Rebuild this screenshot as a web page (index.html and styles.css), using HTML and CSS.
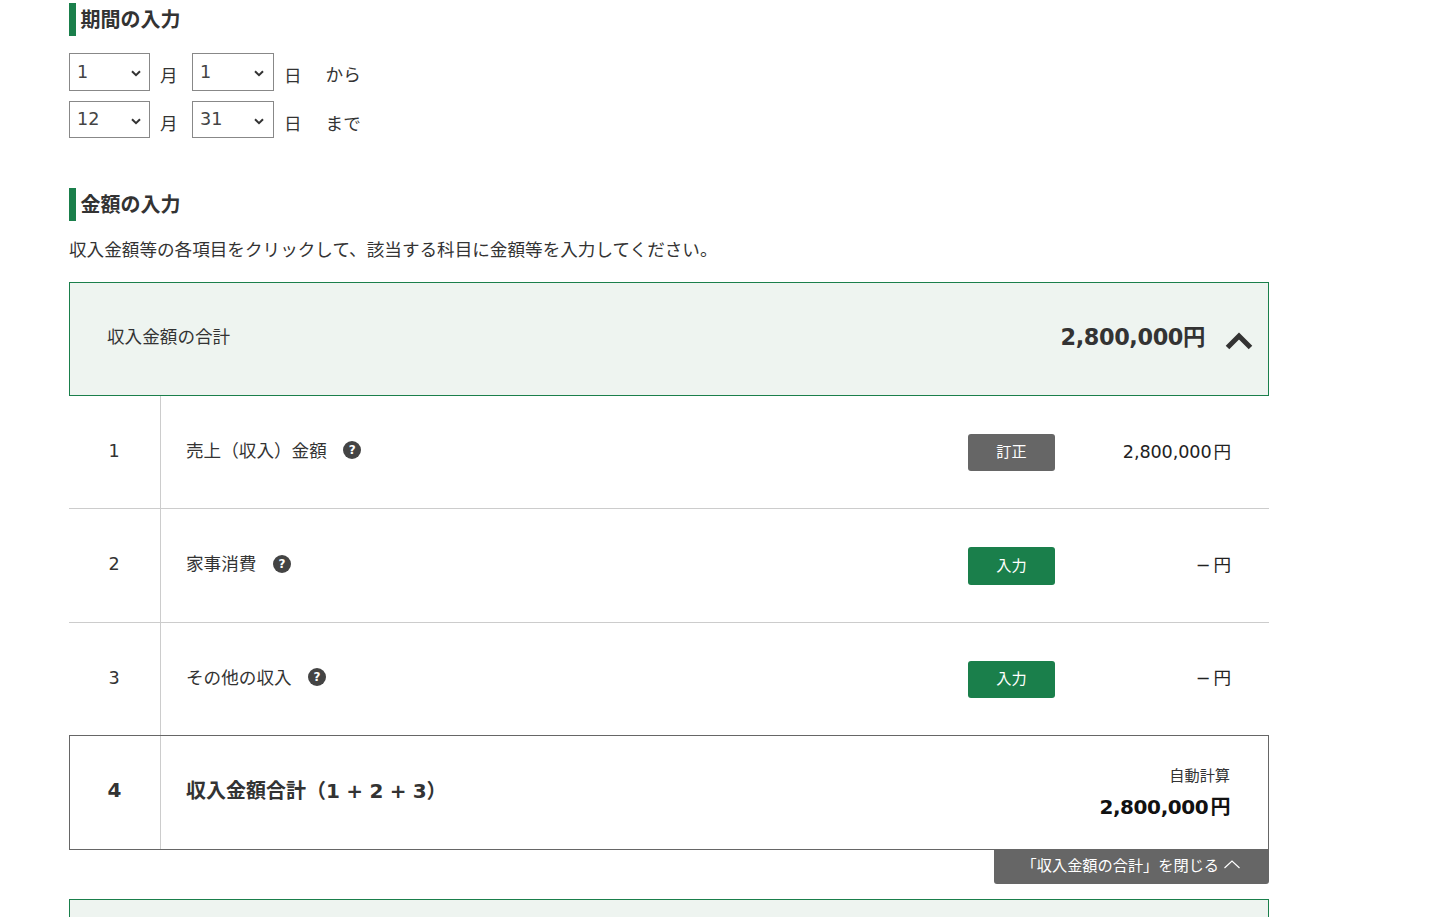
FILE: index.html
```html
<!DOCTYPE html>
<html lang="ja">
<head>
<meta charset="utf-8">
<title>期間と金額の入力</title>
<link rel="stylesheet" href="styles.css">
</head>
<body>
<main class="page">
  <h2 class="heading">期間の入力</h2>
  <div class="date-rows">
    <div class="date-row">
      <div class="sel-wrap"><select class="sel" aria-label="開始月"><option>1</option></select><svg class="sel-arrow" width="10" height="7" viewBox="0 0 10 7" aria-hidden="true"><polyline points="1,1.2 5,5.2 9,1.2" fill="none" stroke="#333" stroke-width="2"/></svg></div><span class="unit">月</span>
      <div class="sel-wrap sel-day"><select class="sel" aria-label="開始日"><option>1</option></select><svg class="sel-arrow" width="10" height="7" viewBox="0 0 10 7" aria-hidden="true"><polyline points="1,1.2 5,5.2 9,1.2" fill="none" stroke="#333" stroke-width="2"/></svg></div><span class="unit">日</span>
      <span class="range">から</span>
    </div>
    <div class="date-row">
      <div class="sel-wrap"><select class="sel" aria-label="終了月"><option>12</option></select><svg class="sel-arrow" width="10" height="7" viewBox="0 0 10 7" aria-hidden="true"><polyline points="1,1.2 5,5.2 9,1.2" fill="none" stroke="#333" stroke-width="2"/></svg></div><span class="unit">月</span>
      <div class="sel-wrap sel-day"><select class="sel" aria-label="終了日"><option>31</option></select><svg class="sel-arrow" width="10" height="7" viewBox="0 0 10 7" aria-hidden="true"><polyline points="1,1.2 5,5.2 9,1.2" fill="none" stroke="#333" stroke-width="2"/></svg></div><span class="unit">日</span>
      <span class="range">まで</span>
    </div>
  </div>

  <h2 class="heading heading-amount">金額の入力</h2>
  <p class="lead">収入金額等の各項目をクリックして、該当する科目に金額等を入力してください。</p>

  <section class="panel">
    <span class="panel-label">収入金額の合計</span>
    <span class="panel-value">2,800,000円</span>
    <svg class="panel-chevron" width="28" height="18" viewBox="0 0 28 18" aria-hidden="true"><polyline points="2.5,15.5 14,4 25.5,15.5" fill="none" stroke="#333" stroke-width="5"/></svg>
  </section>

  <div class="row row-1">
    <div class="num">1</div>
    <div class="body">
      <span class="label">売上（収入）金額</span><span class="help">?</span>
      <button class="btn btn-edit" type="button">訂正</button>
      <div class="amount"><span class="digits">2,800,000</span><span class="yen">円</span></div>
    </div>
  </div>
  <div class="row row-2">
    <div class="num">2</div>
    <div class="body">
      <span class="label">家事消費</span><span class="help">?</span>
      <button class="btn btn-input" type="button">入力</button>
      <div class="amount amount-empty"><span class="digits">−</span><span class="yen">円</span></div>
    </div>
  </div>
  <div class="row row-3">
    <div class="num">3</div>
    <div class="body">
      <span class="label">その他の収入</span><span class="help">?</span>
      <button class="btn btn-input" type="button">入力</button>
      <div class="amount amount-empty"><span class="digits">−</span><span class="yen">円</span></div>
    </div>
  </div>
  <div class="row row-total">
    <div class="num">4</div>
    <div class="body">
      <span class="label">収入金額合計（<span class="sum">1 + 2 + 3</span>）</span>
      <div class="auto">
        <div class="auto-label">自動計算</div>
        <div class="auto-value"><span class="digits">2,800,000</span><span class="yen">円</span></div>
      </div>
    </div>
  </div>
  <div class="close-wrap">
    <button class="close" type="button">「収入金額の合計」を閉じる
      <svg width="18" height="10" viewBox="0 0 18 10" aria-hidden="true"><polyline points="1.5,9 9,2 16.5,9" fill="none" stroke="#fff" stroke-width="1.2"/></svg>
    </button>
  </div>

  <section class="panel panel-next"></section>
</main>
</body>
</html>
```
FILE: styles.css
```css
* { box-sizing: border-box; }
html, body { margin: 0; padding: 0; background: #fff; }
body {
  font-family: "DejaVu Sans", "Noto Sans CJK JP", sans-serif;
  font-size: 17.6px;
  color: #333;
}
.page { width: 1200px; margin-left: 69px; padding-top: 3px; }
.heading {
  margin: 0;
  height: 33px;
  border-left: 7px solid #1a7f4b;
  padding-left: 4.5px;
  font-size: 20px;
  font-weight: 700;
  line-height: 33px;
  padding-top: 1px;
}
.date-rows { margin-top: 17px; }
.date-row { display: flex; align-items: center; height: 38px; margin-bottom: 10px; }
.date-row + .date-row { height: 37px; margin-bottom: 0; }
.sel-wrap { position: relative; width: 81px; height: 100%; }
.sel-wrap.sel-day { width: 82px; }
.sel {
  display: block;
  width: 100%;
  height: 100%;
  appearance: none;
  border: 1px solid #888;
  border-radius: 0;
  background: #fff;
  padding: 0 7px 0;
  color: #444;
  font: inherit;
}
.date-row + .date-row .sel { padding-bottom: 2px; }
.sel-arrow { position: absolute; left: 62px; top: 17px; pointer-events: none; }
.unit { margin: 4px 14.4px 0 10px; width: 17.6px; }
.sel-day + .unit { margin-right: 24px; }
.range { margin-top: 2px; }
.date-row + .date-row .unit, .date-row + .date-row .range { margin-top: 6px; }
.heading-amount { margin-top: 50px; }
.lead { margin: 16px 0 0; line-height: 26px; }
.panel {
  display: flex;
  align-items: center;
  height: 114px;
  margin-top: 19px;
  padding: 0 15px 6px 37px;
  border: 1px solid #1a7f4b;
  background: #eef4f0;
}
.panel-label { flex: 1; margin-bottom: 2px; }
.panel-value { font-size: 22.4px; font-weight: 700; letter-spacing: -0.4px; margin-bottom: 2px; }
.panel-chevron { margin-left: 20px; margin-top: 10px; }
.panel-next { margin-top: 15px; }
.row { display: flex; height: 113px; border-bottom: 1px solid #ccc; }
.row-2 { height: 114px; }
.row-3 { height: 112px; border-bottom: 0; }
.num { width: 92px; padding-right: 1px; border-right: 1px solid #ccc; display: flex; align-items: center; justify-content: center; padding-bottom: 3px; }
.body { flex: 1; display: flex; align-items: center; padding: 0 38px 0 25px; }
.label { padding-bottom: 6px; }
.help {
  display: flex;
  align-items: center;
  justify-content: center;
  width: 18px;
  height: 18px;
  margin: 0 0 4px 16.5px;
  border-radius: 50%;
  background: #444;
  color: #fff;
  font-size: 12px;
  font-weight: 700;
}
.btn {
  width: 87px;
  height: 37px;
  margin-left: auto;
  border: 0;
  border-radius: 3px;
  color: #fff;
  font: inherit;
  font-size: 15.2px;
  padding: 0 0 4px;
}
.btn-edit { background: #666; }
.btn-input { background: #1a7f4b; }
.row-2 .btn { height: 38px; }
.amount { width: 176px; text-align: right; color: #222; padding-bottom: 3px; letter-spacing: -0.1px; }
.amount .yen { margin-left: 2px; }
.amount-empty { padding-bottom: 5px; }
.amount-empty .digits { margin-right: 1px; }
.row-total {
  height: 115px;
  border: 1px solid #666;
}
.row-total .num { width: 91px; font-size: 20px; font-weight: 700; padding-bottom: 6px; }
.row-total .label { font-size: 20px; font-weight: 700; padding-bottom: 6px; }
.sum { letter-spacing: -0.3px; }
.auto { margin-left: auto; text-align: right; padding-bottom: 3px; }
.auto-label { font-size: 15.2px; line-height: 22px; margin-top: 4px; }
.auto-value { margin-top: 5px; font-size: 20px; font-weight: 700; line-height: 30px; color: #111; letter-spacing: -0.4px; }
.auto-value .yen { margin-left: 2px; }
.close-wrap { display: flex; justify-content: flex-end; }
.close {
  display: flex;
  align-items: center;
  justify-content: flex-end;
  gap: 4px;
  width: 275px;
  height: 34px;
  padding: 0 28px 6px 0;
  border: 0;
  border-radius: 0 0 3px 3px;
  background: #666;
  color: #fff;
  font: inherit;
  font-size: 15.2px;
}
```
